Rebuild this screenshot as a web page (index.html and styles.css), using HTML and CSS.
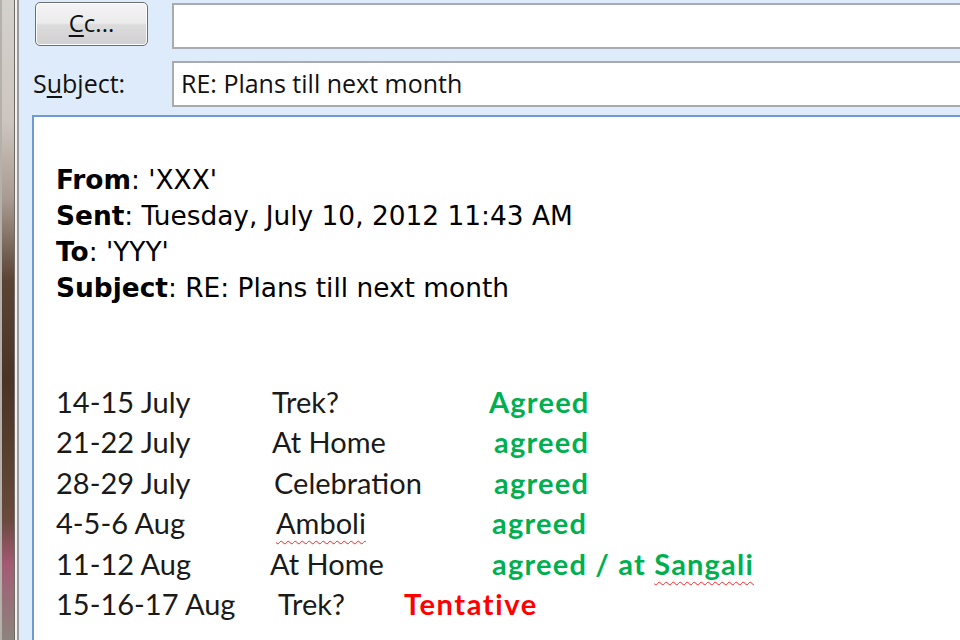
FILE: index.html
```html
<!DOCTYPE html>
<html>
<head>
<meta charset="utf-8">
<link rel="stylesheet" href="styles.css">
</head>
<body>
<div class="screen">
  <div class="desk"></div>
  <div class="frame"></div>
  <div class="window">
    <div class="field-row row-cc">
      <button class="cc-btn"><span class="ul">C</span>c...</button>
      <div class="input"></div>
    </div>
    <div class="field-row row-subject">
      <div class="label">S<span class="ul">u</span>bject:</div>
      <div class="input">RE: Plans till next month</div>
    </div>
    <div class="body">
      <div class="hdr">
        <div><b>From</b>: 'XXX'</div>
        <div><b>Sent</b>: Tuesday, July 10, 2012 11:43 AM</div>
        <div><b>To</b>: 'YYY'</div>
        <div><b>Subject</b>: RE: Plans till next month</div>
      </div>
      <div class="plan">
        <div class="prow"><span class="c1">14-15 July</span><span class="c2">Trek?</span><span class="c3 ok">Agreed</span></div>
        <div class="prow"><span class="c1">21-22 July</span><span class="c2">At Home</span><span class="c3 ok sh">agreed</span></div>
        <div class="prow"><span class="c1">28-29 July</span><span class="c2 s2">Celebration</span><span class="c3 ok sh">agreed</span></div>
        <div class="prow"><span class="c1">4-5-6 Aug</span><span class="c2 s4"><span class="sp">Amboli</span></span><span class="c3 ok s3">agreed</span></div>
        <div class="prow"><span class="c1">11-12 Aug</span><span class="c2 sl">At Home</span><span class="c3 ok s3">agreed / at <span class="sp">Sangali</span></span></div>
        <div class="prow last"><span class="c1">15-16-17 Aug</span><span class="c2">Trek?</span><span class="c3 tent">Tentative</span></div>
      </div>
    </div>
  </div>
</div>
</body>
</html>
```
FILE: styles.css
```css
html, body {
  margin: 0;
  padding: 0;
  width: 960px;
  height: 640px;
  overflow: hidden;
  background: #ffffff;
}

.screen {
  display: flex;
  width: 960px;
  height: 640px;
}

.desk {
  width: 12px;
  flex: none;
  border-left: 2px solid #b4b0ac;
  background: linear-gradient(to bottom,
    #d4d0cc 0px, #cdc6c0 120px, #a89a90 200px,
    #5a4434 280px, #4a3426 380px, #5b4232 470px,
    #6a4a3e 520px, #a45a74 565px, #9a6a78 590px, #8c847c 640px);
}

.frame {
  width: 4px;
  flex: none;
  border-left: 1px solid #6e6a66;
  background: linear-gradient(to right, #f2f2f2 0, #f2f2f2 2px, #9a9a9a 2px);
}

.window {
  flex: 1;
  display: flex;
  flex-direction: column;
  background: #deebfa;
  font-family: "Open Sans", "Noto Sans", sans-serif;
  color: #111;
}

.field-row {
  display: flex;
  align-items: center;
}

.row-cc {
  height: 55px;
  padding-left: 16px;
  align-items: flex-start;
  padding-top: 2px;
  box-sizing: border-box;
}

.cc-btn {
  width: 113px;
  height: 44px;
  flex: none;
  border: 1px solid #6f6f6f;
  border-radius: 5px;
  background: linear-gradient(to bottom, #f4f4f4 0%, #ebebeb 48%, #dcdcdc 52%, #d0d0d0 100%);
  box-shadow: inset 0 0 0 1px #fbfbfb;
  font-family: "Open Sans", "Noto Sans", sans-serif;
  font-size: 24px;
  color: #111;
  padding: 0 0 4px 0;
  margin-right: 24px;
}

.ul {
  text-decoration: underline;
  text-underline-offset: 3px;
  text-decoration-thickness: 2px;
}

.input {
  flex: 1;
  height: 46px;
  box-sizing: border-box;
  background: #ffffff;
  border: 2px solid #a9abae;
  border-right: none;
  font-size: 25px;
  line-height: 40px;
  padding-left: 7px;
  margin-top: 1px;
}

.row-subject {
  height: 60px;
  padding-top: 5px;
  padding-bottom: 9px;
  box-sizing: border-box;
  align-items: flex-start;
}

.label {
  width: 153px;
  flex: none;
  padding-left: 14px;
  box-sizing: border-box;
  font-size: 25px;
  line-height: 46px;
}

.body {
  flex: 1;
  margin-left: 13px;
  background: #ffffff;
  border-top: 2px solid #6e99d4;
  border-left: 2px solid #6e99d4;
  padding: 45px 0 0 22px;
}

.hdr {
  font-family: "DejaVu Sans", sans-serif;
  font-size: 26.4px;
  line-height: 36px;
  color: #000;
}

.hdr b {
  font-weight: bold;
}

.plan {
  margin-top: 76px;
  font-family: "Lato", "Open Sans", sans-serif;
  font-size: 29px;
  line-height: 40.4px;
  color: #1a1a1a;
}

.prow {
  display: flex;
  white-space: nowrap;
}

.c1 {
  width: 216px;
  flex: none;
}

.c2 {
  width: 217px;
  flex: none;
}

.c2.s2 { padding-left: 2px; width: 215px; }
.c2.s4 { padding-left: 4px; width: 213px; }
.c2.sl { margin-left: -2px; width: 219px; }

.ok {
  color: #00b050;
  font-weight: bold;
  letter-spacing: 1.2px;
}

.c3.sh { padding-left: 5px; }
.c3.s3 { padding-left: 3px; }

.tent {
  color: #ff0000;
  font-weight: bold;
  letter-spacing: 1.6px;
}

.prow.last .c2 {
  padding-left: 6px;
  width: 126px;
}

.sp {
  text-decoration: underline wavy #ff2020;
  text-decoration-thickness: 1px;
  text-underline-offset: 6px;
}
```
